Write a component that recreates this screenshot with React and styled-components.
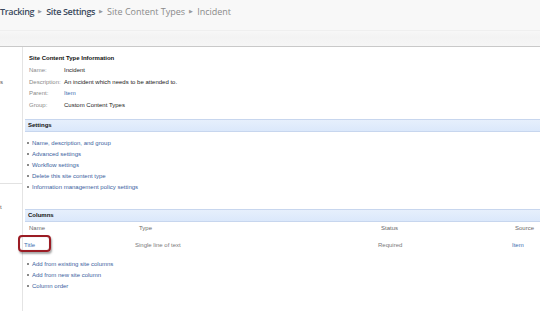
import React from 'react';
import styled, { createGlobalStyle } from 'styled-components';

const Global = createGlobalStyle`
  html, body {
    margin: 0;
    padding: 0;
    background: #fff;
  }
  body {
    width: 540px;
    height: 311px;
    overflow: hidden;
    font-family: "Liberation Sans", Arial, sans-serif;
  }
`;

const Page = styled.div`
  width: 540px;
  height: 311px;
  display: flex;
  flex-direction: column;
  overflow: hidden;
`;

const Header = styled.div`
  height: 30px;
  background: #f8f8f8;
  display: flex;
  align-items: center;
  padding-bottom: 8px;
  box-sizing: border-box;
  font-family: "Open Sans", sans-serif;
  font-size: 9px;
  white-space: nowrap;
`;

const Crumb = styled.span`
  color: ${(p) => (p.$current ? '#8a8a8a' : '#3b4a5e')};
  font-weight: ${(p) => (p.$current ? 400 : 600)};
  letter-spacing: ${(p) => (p.$current ? 0 : -0.35)}px;
`;

const Sep = styled.span`
  color: #9a9a9a;
  font-size: 5px;
  margin: 0 4px;
`;

const Band = styled.div`
  height: 15px;
  background: linear-gradient(#f7f7f7, #f3f3f3 40%, #f6f6f6);
  border-top: 1px solid #efefef;
  border-bottom: 1px solid #c9c9c9;
`;

const Body = styled.div`
  flex: 1;
  display: flex;
`;

const Nav = styled.div`
  width: 22px;
  border-right: 1px solid #e4e4e4;
  display: flex;
  flex-direction: column;
  font-size: 6px;
  color: #555;
`;

const NavItem = styled.div`
  height: ${(p) => p.$h}px;
  padding-top: ${(p) => p.$pt}px;
  box-sizing: border-box;
  border-bottom: ${(p) => (p.$line ? '1px solid #e2e2e2' : 'none')};
  overflow: hidden;
`;

const Main = styled.div`
  flex: 1;
  padding-top: 6px;
  font-size: 6px;
  color: #222;
`;

const Info = styled.div`
  padding-left: 6px;
`;

const InfoTitle = styled.div`
  font-weight: bold;
  color: #111;
  height: 12px;
  line-height: 10px;
`;

const InfoRow = styled.div`
  display: grid;
  grid-template-columns: 35px 1fr;
  height: 11.7px;
  line-height: 11px;
`;

const Label = styled.span`
  color: #8a8a8a;
`;

const Value = styled.span`
  color: ${(p) => (p.$link ? '#3c6fb0' : '#222')};
`;

const SectionHead = styled.div`
  margin-top: ${(p) => p.$mt}px;
  margin-left: 2px;
  height: 11px;
  line-height: 11px;
  background: linear-gradient(#e6effc, #dbe8fb);
  border-top: 1px solid #c7d6ee;
  border-bottom: 1px solid #c7d6ee;
  padding-left: 3px;
  font-weight: bold;
  color: #111;
`;

const LinkList = styled.ul`
  list-style: none;
  margin: ${(p) => p.$mt}px 0 0 0;
  padding: 0 0 0 4px;
`;

const LinkItem = styled.li`
  height: 11px;
  line-height: 11px;
  display: flex;
  align-items: center;
  color: #3a62a0;
  &::before {
    content: '';
    width: 2px;
    height: 2px;
    background: #8a8a8a;
    margin-right: 3px;
  }
`;

const Table = styled.div`
  margin-top: 1px;
`;

const TRow = styled.div`
  display: grid;
  grid-template-columns: 112px 243px 134px 1fr;
  height: ${(p) => p.$h}px;
  align-items: center;
  color: ${(p) => (p.$head ? '#6a6a6a' : '#7a7a7a')};
`;

const Cell = styled.span`
  padding-left: ${(p) => p.$pl || 0}px;
  color: ${(p) => (p.$link ? '#3c6fb0' : 'inherit')};
  white-space: nowrap;
`;

const Highlight = styled.span`
  position: relative;
  display: inline-block;
  &::after {
    content: '';
    position: absolute;
    left: -6px;
    top: -7px;
    width: 29px;
    height: 13px;
    border: 2px solid #9b1c24;
    border-radius: 4px;
    box-shadow: 1px 2px 2px rgba(0, 0, 0, 0.35), inset 0 0 1px rgba(0, 0, 0, 0.3);
  }
`;

const settings = [
  'Name, description, and group',
  'Advanced settings',
  'Workflow settings',
  'Delete this site content type',
  'Information management policy settings',
];

const columnLinks = ['Add from existing site columns', 'Add from new site column', 'Column order'];

const App = () => (
  <>
    <Global />
    <Page>
      <Header>
        <Crumb>Tracking</Crumb>
        <Sep>▶</Sep>
        <Crumb>Site Settings</Crumb>
        <Sep>▶</Sep>
        <Crumb $current>Site Content Types</Crumb>
        <Sep>▶</Sep>
        <Crumb $current>Incident</Crumb>
      </Header>
      <Band />
      <Body>
        <Nav>
          <NavItem $h={137} $pt={32} $line>s</NavItem>
          <NavItem $h={40} $pt={20}>t</NavItem>
        </Nav>
        <Main>
          <Info>
            <InfoTitle>Site Content Type Information</InfoTitle>
            <InfoRow><Label>Name:</Label><Value>Incident</Value></InfoRow>
            <InfoRow><Label>Description:</Label><Value>An incident which needs to be attended to.</Value></InfoRow>
            <InfoRow><Label>Parent:</Label><Value $link>Item</Value></InfoRow>
            <InfoRow><Label>Group:</Label><Value>Custom Content Types</Value></InfoRow>
          </Info>
          <SectionHead $mt={7}>Settings</SectionHead>
          <LinkList $mt={6}>
            {settings.map((s) => (
              <LinkItem key={s}>{s}</LinkItem>
            ))}
          </LinkList>
          <SectionHead $mt={16}>Columns</SectionHead>
          <Table>
            <TRow $head $h={10}>
              <Cell $pl={6}>Name</Cell>
              <Cell $pl={4}>Type</Cell>
              <Cell $pl={3}>Status</Cell>
              <Cell $pl={3}>Source</Cell>
            </TRow>
            <TRow $h={24}>
              <Cell $pl={1} $link>
                <Highlight>Title</Highlight>
              </Cell>
              <Cell>Single line of text</Cell>
              <Cell>Required</Cell>
              <Cell $link>Item</Cell>
            </TRow>
          </Table>
          <LinkList $mt={2}>
            {columnLinks.map((s) => (
              <LinkItem key={s}>{s}</LinkItem>
            ))}
          </LinkList>
        </Main>
      </Body>
    </Page>
  </>
);

export default App;
